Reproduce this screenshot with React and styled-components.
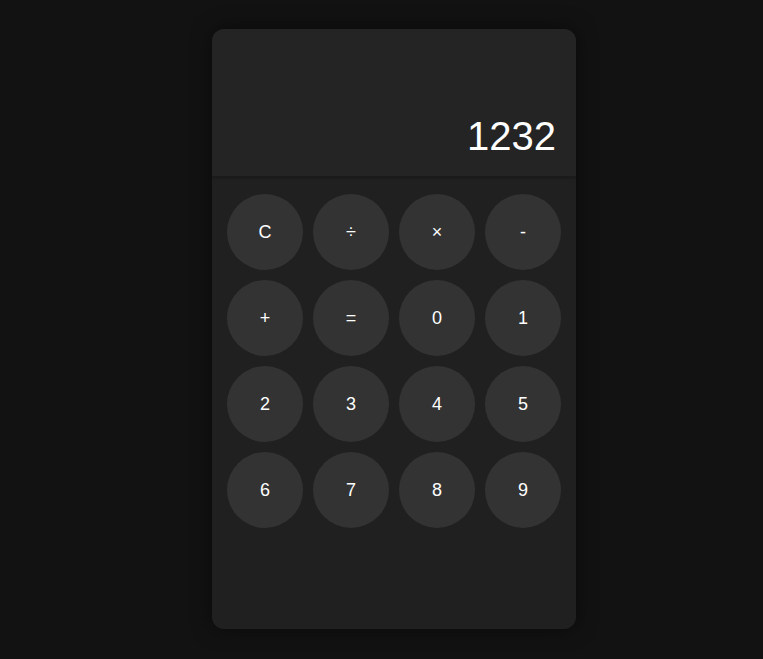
import React from "react";
import styled, { createGlobalStyle } from "styled-components";

const Global = createGlobalStyle`
  html, body { margin: 0; padding: 0; background: #121212; }
  body { font-family: "Liberation Sans", Arial, sans-serif; }
`;

const Page = styled.div`
  display: flex;
  justify-content: center;
  padding: 29px 0 0 25px;
  min-height: 659px;
  box-sizing: border-box;
`;

const Card = styled.div`
  width: 364px;
  height: 600px;
  background: #202020;
  border-radius: 12px;
  overflow: hidden;
  box-shadow: 0 0 20px rgba(0, 0, 0, 0.5);
  display: flex;
  flex-direction: column;
`;

const Display = styled.div`
  height: 148px;
  box-sizing: border-box;
  background: #242424;
  border-bottom: 1px solid #1b1b1b;
  box-shadow: 0 1px 2px rgba(0,0,0,0.25);
  display: flex;
  align-items: flex-end;
  justify-content: flex-end;
  padding: 0 20px 17px;
  color: #ffffff;
  font-size: 40px;
`;

const Keys = styled.div`
  display: grid;
  grid-template-columns: repeat(4, 76px);
  gap: 10px;
  padding: 17px 15px;
`;

const Key = styled.button`
  width: 76px;
  height: 76px;
  border-radius: 50%;
  border: none;
  background: #333333;
  color: #ffffff;
  font-family: "Liberation Sans", Arial, sans-serif;
  font-size: 18px;
  display: flex;
  align-items: center;
  justify-content: center;
  padding: 0;
  cursor: pointer;
`;

const keys = ["C", "÷", "×", "-", "+", "=", "0", "1", "2", "3", "4", "5", "6", "7", "8", "9"];

export default function App() {
  return (
    <>
      <Global />
      <Page>
        <Card>
          <Display>1232</Display>
          <Keys>
            {keys.map((k) => (
              <Key key={k}>{k}</Key>
            ))}
          </Keys>
        </Card>
      </Page>
    </>
  );
}
